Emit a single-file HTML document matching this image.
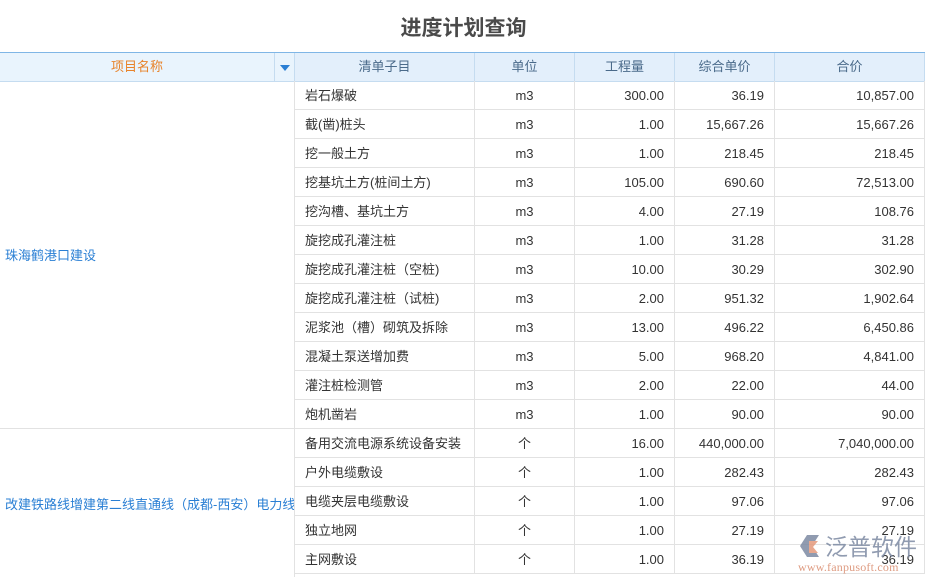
<!DOCTYPE html>
<html><head><meta charset="utf-8"><style>
*{margin:0;padding:0;box-sizing:border-box}
body{width:927px;height:577px;overflow:hidden;background:#fff;font-family:"Liberation Sans","Noto Sans CJK SC",sans-serif;font-size:13px;color:#333;position:relative}
.t{position:absolute;left:0;top:12px;width:927px;text-align:center;font-size:21px;font-weight:bold;color:#4a4a4a}
.hd{position:absolute;top:52px;left:0;width:925px;height:30px;background:#e3effb;border-top:1px solid #7fb6e6;border-bottom:1px solid #c5dcf0}
.c{position:absolute;height:29px;line-height:29px;white-space:nowrap;overflow:hidden}
.h{top:53px;height:28px;line-height:27px;text-align:center;color:#4a6a8a;border-right:1px solid #c5dcf0}
.r{border-right:1px solid #e2e2e2;border-bottom:1px solid #e2e2e2}
.n{text-align:right;padding-right:10px}
.p{position:absolute;left:0;width:295px;border-right:1px solid #e2e2e2;border-bottom:1px solid #e2e2e2;color:#2a7fd4;padding-left:5px;display:flex;align-items:center;white-space:nowrap;overflow:hidden}
</style></head><body>
<div class="t">进度计划查询</div>
<div class="hd"></div>
<div class="c h" style="left:0;width:275px;color:#e8832a;background:#e9f4fd">项目名称</div>
<div class="c h" style="left:275px;width:20px;background:#e9f4fd"><span style="display:inline-block;width:0;height:0;border-left:5px solid transparent;border-right:5px solid transparent;border-top:6px solid #2a7fd4;vertical-align:middle"></span></div>
<div class="c h" style="left:295px;width:180px">清单子目</div>
<div class="c h" style="left:475px;width:100px">单位</div>
<div class="c h" style="left:575px;width:100px">工程量</div>
<div class="c h" style="left:675px;width:100px">综合单价</div>
<div class="c h" style="left:775px;width:150px">合价</div>
<div class="p" style="top:81px;height:348px">珠海鹤港口建设</div>
<div class="p" style="top:429px;height:148px;border-bottom:none">改建铁路线增建第二线直通线（成都-西安）电力线</div>
<div id="rows"></div>
<script>
var d=[["岩石爆破","m3","300.00","36.19","10,857.00"],["截(凿)桩头","m3","1.00","15,667.26","15,667.26"],["挖一般土方","m3","1.00","218.45","218.45"],["挖基坑土方(桩间土方)","m3","105.00","690.60","72,513.00"],["挖沟槽、基坑土方","m3","4.00","27.19","108.76"],["旋挖成孔灌注桩","m3","1.00","31.28","31.28"],["旋挖成孔灌注桩（空桩)","m3","10.00","30.29","302.90"],["旋挖成孔灌注桩（试桩)","m3","2.00","951.32","1,902.64"],["泥浆池（槽）砌筑及拆除","m3","13.00","496.22","6,450.86"],["混凝土泵送增加费","m3","5.00","968.20","4,841.00"],["灌注桩检测管","m3","2.00","22.00","44.00"],["炮机凿岩","m3","1.00","90.00","90.00"],["备用交流电源系统设备安装","个","16.00","440,000.00","7,040,000.00"],["户外电缆敷设","个","1.00","282.43","282.43"],["电缆夹层电缆敷设","个","1.00","97.06","97.06"],["独立地网","个","1.00","27.19","27.19"],["主网敷设","个","1.00","36.19","36.19"]];
var h="";d.forEach(function(r,i){var y=81+29*i;
h+='<div class="c r" style="top:'+y+'px;left:295px;width:180px;padding-left:10px">'+r[0]+'</div>';
h+='<div class="c r" style="top:'+y+'px;left:475px;width:100px;text-align:center">'+r[1]+'</div>';
h+='<div class="c r n" style="top:'+y+'px;left:575px;width:100px">'+r[2]+'</div>';
h+='<div class="c r n" style="top:'+y+'px;left:675px;width:100px">'+r[3]+'</div>';
h+='<div class="c r n" style="top:'+y+'px;left:775px;width:150px">'+r[4]+'</div>';});
document.getElementById("rows").innerHTML=h;
</script>
<div style="position:absolute;left:796px;top:529px;width:131px;height:48px;opacity:.85">
<svg width="28" height="28" style="position:absolute;left:0;top:3px"><path d="M4 14 L11 3 L23 3 L16 14 L23 25 L11 25 Z" fill="#7d8aa3"/><path d="M13 9 L22 9 L17 15 L22 21 L13 21 Z" fill="#e49a7c"/></svg>
<div style="position:absolute;left:29px;top:1px;font-size:23px;color:#7d8aa3;font-family:'Noto Sans CJK SC',sans-serif;line-height:30px">泛普软件</div>
<div style="position:absolute;left:2px;top:31px;font-size:12px;color:#d98a6c;font-family:'Liberation Serif',serif;letter-spacing:.2px">www.fanpusoft.com</div>
</div>
</body></html>
